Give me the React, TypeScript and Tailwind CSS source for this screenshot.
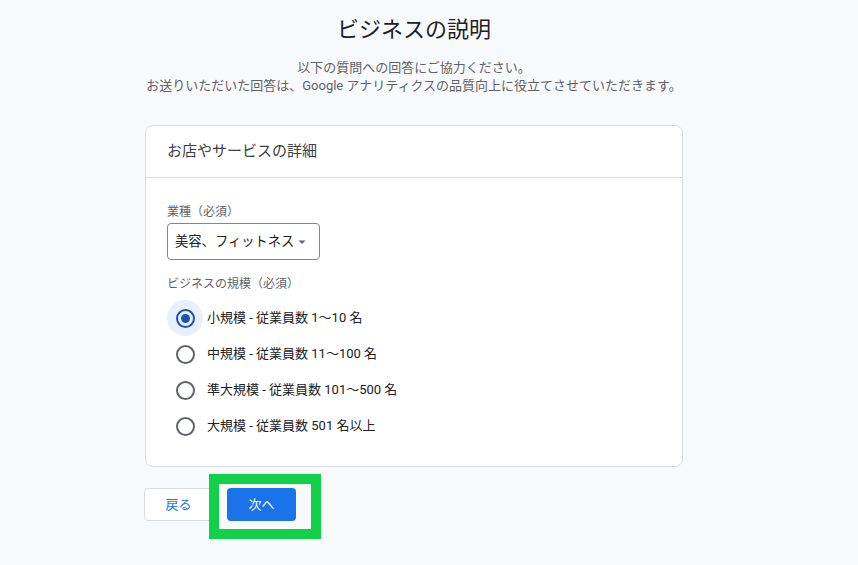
const font = { fontFamily: 'Roboto, "Noto Sans CJK JP", "Noto Sans", sans-serif' };

const sizes = [
  "小規模 - 従業員数 1〜10 名",
  "中規模 - 従業員数 11〜100 名",
  "準大規模 - 従業員数 101〜500 名",
  "大規模 - 従業員数 501 名以上",
];

function Radio({ checked }: { checked: boolean }) {
  return (
    <span
      className={`flex h-[36px] w-[36px] items-center justify-center rounded-full ${
        checked ? "bg-[#e8f0fe]" : ""
      }`}
    >
      <span
        className={`flex h-[19px] w-[19px] items-center justify-center rounded-full border-2 ${
          checked ? "border-[#1c52b8]" : "border-[#5f6368]"
        }`}
      >
        {checked && <span className="h-[9px] w-[9px] rounded-full bg-[#1c52b8]" />}
      </span>
    </span>
  );
}

export default function App() {
  return (
    <div className="relative min-h-[565px] w-full bg-[#f8f9fa] text-[#202124]" style={font}>
      <div className="ml-[145px] w-[538px] pt-[14px]">
        <h1 className="text-center text-[22px] leading-[32px] text-[#202124]">ビジネスの説明</h1>
        <div className="mt-[13px] text-center text-[13px] leading-[18px] text-[#5f6368]">
          <p>以下の質問への回答にご協力ください。</p>
          <p className="-mx-[10px]">お送りいただいた回答は、Google アナリティクスの品質向上に役立てさせていただきます。</p>
        </div>

        <section className="mt-[30px] rounded-[8px] border border-[#dadce0] bg-white">
          <header className="flex h-[52px] items-center border-b border-[#dadce0] px-[21px]">
            <h2 className="text-[15px] text-[#3c4043]">お店やサービスの詳細</h2>
          </header>
          <div className="px-[21px] pt-[26px] pb-[22px]">
            <p className="text-[12px] leading-[16px] text-[#5f6368]">業種（必須）</p>
            <button className="mt-[3px] flex h-[37px] w-[153px] items-center rounded-[4px] border border-[#80868b] bg-white pl-[7px] text-[13.3px] text-[#202124]">
              美容、フィットネス
              <svg width="10" height="10" viewBox="0 0 10 10" className="ml-[3px]">
                <path d="M1.5 3.5h7L5 7z" fill="#5f6368" />
              </svg>
            </button>
            <p className="mt-[16px] text-[12px] leading-[16px] text-[#5f6368]">ビジネスの規模（必須）</p>
            <div className="mt-[8px] flex flex-col">
              {sizes.map((s, i) => (
                <label key={s} className="flex h-[36px] items-center gap-[4px] text-[13px] text-[#202124]">
                  <Radio checked={i === 0} />
                  {s}
                </label>
              ))}
            </div>
          </div>
        </section>

        <div className="mt-[21px] flex items-center">
          <button className="-ml-px h-[33px] w-[69px] rounded-[4px] border border-[#dadce0] bg-white text-[13px] text-[#1a73e8]">
            戻る
          </button>
          <button className="ml-[14px] h-[33px] w-[69px] rounded-[4px] bg-[#1a73e8] text-[13px] text-white">
            次へ
          </button>
        </div>
      </div>

      <div className="absolute left-[209px] top-[474px] h-[65px] w-[112px] border-[10px] border-[#11d04a]" />
    </div>
  );
}
